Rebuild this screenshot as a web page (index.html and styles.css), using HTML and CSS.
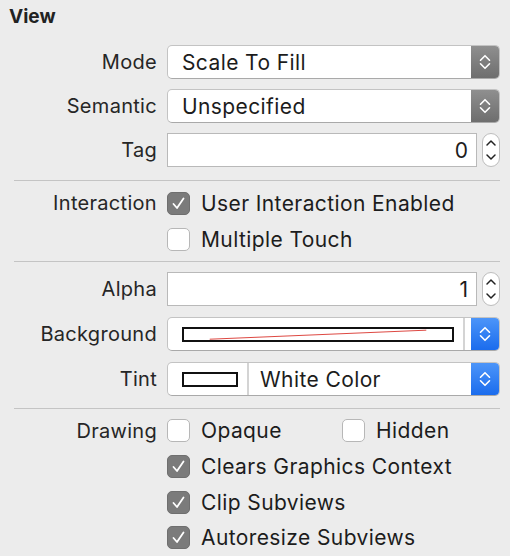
FILE: index.html
```html
<!DOCTYPE html>
<html>
<head>
<meta charset="utf-8">
<link rel="stylesheet" href="styles.css">
</head>
<body>
<div class="panel">
  <div class="heading">View</div>

  <div class="grid sec1">
    <div class="label">Mode</div>
    <div class="popup">
      <span class="ptext">Scale To Fill</span>
      <span class="arrows gray"><svg viewBox="0 0 12 18" width="12" height="18"><path d="M1.5 7.2 L6 2.7 L10.5 7.2 M1.5 10.8 L6 15.3 L10.5 10.8" /></svg></span>
    </div>
    <div class="label">Semantic</div>
    <div class="popup">
      <span class="ptext">Unspecified</span>
      <span class="arrows gray"><svg viewBox="0 0 12 18" width="12" height="18"><path d="M1.5 7.2 L6 2.7 L10.5 7.2 M1.5 10.8 L6 15.3 L10.5 10.8" /></svg></span>
    </div>
    <div class="label">Tag</div>
    <div class="fieldrow">
      <div class="field">0</div>
      <div class="stepper"><svg viewBox="0 0 18 34" width="18" height="34"><path d="M5 12 L9 8 L13 12 M5 22 L9 26 L13 22" /></svg></div>
    </div>
  </div>

  <div class="sep"></div>

  <div class="grid checks sec2">
    <div class="label">Interaction</div>
    <div class="check"><span class="box on"><svg viewBox="0 0 23 23" width="23" height="23"><path d="M6.5 12 L10 16 L16.5 6.5" /></svg></span>User Interaction Enabled</div>
    <div class="label"></div>
    <div class="check"><span class="box"></span>Multiple Touch</div>
  </div>

  <div class="sep"></div>

  <div class="grid sec3">
    <div class="label">Alpha</div>
    <div class="fieldrow">
      <div class="field">1</div>
      <div class="stepper"><svg viewBox="0 0 18 34" width="18" height="34"><path d="M5 12 L9 8 L13 12 M5 22 L9 26 L13 22" /></svg></div>
    </div>
    <div class="label">Background</div>
    <div class="popup">
      <span class="well wide">
        <span class="swatch big"><svg viewBox="0 0 271 14" preserveAspectRatio="none"><line x1="26" y1="13" x2="245" y2="1.5" /></svg></span>
      </span>
      <span class="gapw"></span>
      <span class="arrows blue"><svg viewBox="0 0 12 18" width="12" height="18"><path d="M1.5 7.2 L6 2.7 L10.5 7.2 M1.5 10.8 L6 15.3 L10.5 10.8" /></svg></span>
    </div>
    <div class="label">Tint</div>
    <div class="popup">
      <span class="well small"><span class="swatch"></span></span>
      <span class="ptext tint">White Color</span>
      <span class="arrows blue"><svg viewBox="0 0 12 18" width="12" height="18"><path d="M1.5 7.2 L6 2.7 L10.5 7.2 M1.5 10.8 L6 15.3 L10.5 10.8" /></svg></span>
    </div>
  </div>

  <div class="sep"></div>

  <div class="grid checks sec4">
    <div class="label">Drawing</div>
    <div class="pair">
      <div class="check first"><span class="box"></span>Opaque</div>
      <div class="check"><span class="box"></span>Hidden</div>
    </div>
    <div class="label"></div>
    <div class="check"><span class="box on"><svg viewBox="0 0 23 23" width="23" height="23"><path d="M6.5 12 L10 16 L16.5 6.5" /></svg></span>Clears Graphics Context</div>
    <div class="label"></div>
    <div class="check"><span class="box on"><svg viewBox="0 0 23 23" width="23" height="23"><path d="M6.5 12 L10 16 L16.5 6.5" /></svg></span>Clip Subviews</div>
    <div class="label"></div>
    <div class="check"><span class="box on"><svg viewBox="0 0 23 23" width="23" height="23"><path d="M6.5 12 L10 16 L16.5 6.5" /></svg></span>Autoresize Subviews</div>
  </div>
</div>
</body>
</html>
```

FILE: styles.css
```css
html, body {
  margin: 0;
  padding: 0;
  background: #ececec;
}
body {
  font-family: Inter, "Liberation Sans", sans-serif;
  color: #222;
  width: 510px;
  height: 556px;
  overflow: hidden;
}
.heading {
  font-weight: 700;
  font-size: 19px;
  line-height: 22px;
  padding: 6px 0 0 9px;
  height: 39px;
  box-sizing: border-box;
  color: #222;
}
.grid {
  display: grid;
  grid-template-columns: 157px 1fr;
  column-gap: 10px;
  padding-right: 10px;
}
.sec1 {
  padding-top: 6px;
  row-gap: 10px;
  grid-auto-rows: 34px;
  padding-bottom: 13px;
}
.sec3 {
  padding-top: 10px;
  row-gap: 11px;
  grid-auto-rows: 34px;
  padding-bottom: 12px;
}
.checks {
  grid-auto-rows: 36px;
  padding-top: 4px;
}
.sec2 { padding-bottom: 4px; }
.sec4 { grid-auto-rows: 35.7px; }
.label {
  font-size: 20px;
  letter-spacing: 0.3px;
  text-align: right;
  display: flex;
  align-items: center;
  justify-content: flex-end;
  color: #262626;
}
.sep {
  margin: 0 10px 0 14px;
  border-top: 1px solid #c4c4c4;
}
.popup {
  display: flex;
  align-items: stretch;
  background: #fff;
  border: 1px solid #c3c3c3;
  border-bottom-color: #a9a9a9;
  border-radius: 5px;
  overflow: hidden;
  box-sizing: border-box;
}
.ptext {
  flex: 1;
  display: flex;
  align-items: center;
  padding-left: 14px;
  font-size: 21px;
  letter-spacing: 0.4px;
  color: #1c1c1c;
}
.ptext.tint { padding-left: 11px; }
.arrows {
  width: 28px;
  display: flex;
  align-items: center;
  justify-content: center;
}
.arrows svg path {
  fill: none;
  stroke: #fff;
  stroke-width: 1.6;
  stroke-linecap: round;
  stroke-linejoin: round;
}
.arrows.gray {
  background: linear-gradient(#8f8f8f, #6e6e6e);
}
.arrows.blue {
  background: linear-gradient(#4c95f9, #1b6ced);
}
.fieldrow {
  display: flex;
  gap: 5px;
}
.field {
  flex: 1;
  background: #fff;
  border: 1px solid #b9b9b9;
  box-sizing: border-box;
  font-size: 21px;
  display: flex;
  align-items: center;
  justify-content: flex-end;
  padding-right: 8px;
  color: #1c1c1c;
}
.stepper {
  width: 18px;
  background: #fff;
  border: 1px solid #bdbdbd;
  border-radius: 9px;
  box-sizing: border-box;
  display: flex;
  align-items: center;
  justify-content: center;
  overflow: hidden;
}
.stepper svg { flex: none; }
.stepper svg path {
  fill: none;
  stroke: #222;
  stroke-width: 1.5;
  stroke-linecap: round;
  stroke-linejoin: round;
}
.well {
  display: flex;
  align-items: center;
  border-right: 2px solid #d4d4d4;
}
.well.wide { flex: 1; padding-left: 14px; }
.gapw { width: 6px; }
.well.small { width: 81px; padding-left: 14px; box-sizing: border-box; }
.swatch {
  display: block;
  width: 56px;
  height: 15px;
  border: 2px solid #111;
  box-sizing: border-box;
  background: #fff;
}
.swatch.big {
  width: 272px;
  height: 15px;
}
.swatch.big svg {
  display: block;
  width: 100%;
  height: 100%;
}
.swatch.big line {
  stroke: #d9302a;
  stroke-width: 1;
}
.check {
  display: flex;
  align-items: center;
  font-size: 21px;
  letter-spacing: 0.4px;
  color: #1c1c1c;
}
.box {
  width: 23px;
  height: 23px;
  box-sizing: border-box;
  border: 1px solid #b7b7b7;
  border-radius: 5px;
  background: #fff;
  margin-right: 11px;
  flex: none;
}
.box.on {
  background: #7b7b7b;
  border-color: #6f6f6f;
}
.box svg { display: block; margin: -1px; }
.box svg path {
  fill: none;
  stroke: #fff;
  stroke-width: 1.8;
  stroke-linecap: round;
  stroke-linejoin: round;
}
.pair {
  display: flex;
}
.check.first { width: 175px; }
```
